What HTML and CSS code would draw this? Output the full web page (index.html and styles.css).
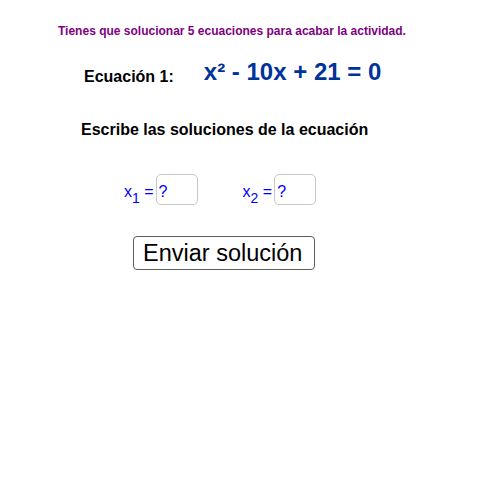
FILE: index.html
```html
<!DOCTYPE html>
<html lang="es">
<head>
<meta charset="utf-8">
<title>Ecuaciones</title>
<link rel="stylesheet" href="styles.css">
</head>
<body>
<div class="page">
  <p class="note">Tienes que solucionar 5 ecuaciones para acabar la actividad.</p>
  <div class="eq-row">
    <span class="eq-label">Ecuación 1:</span>
    <span class="eq">x² - 10x + 21 = 0</span>
  </div>
  <p class="prompt">Escribe las soluciones de la ecuación</p>
  <div class="answers">
    <div class="answer">
      <span class="var">x<sub class="idx">1</sub> =</span>
      <div class="box">?</div>
    </div>
    <div class="answer">
      <span class="var">x<sub class="idx">2</sub> =</span>
      <div class="box">?</div>
    </div>
  </div>
  <button class="send" type="button">Enviar solución</button>
</div>
</body>
</html>
```
FILE: styles.css
```css
html, body {
  margin: 0;
  padding: 0;
  background: #ffffff;
}

.page {
  width: 502px;
  height: 503px;
  padding-top: 24px;
  box-sizing: border-box;
  font-family: "Liberation Sans", Arial, sans-serif;
  color: #000000;
}

.note {
  margin: 0 0 0 58px;
  font-size: 12px;
  line-height: 14px;
  font-weight: bold;
  color: #800080;
}

.eq-row {
  display: flex;
  align-items: flex-start;
  margin-top: 20px;
  padding-left: 84px;
}

.eq-label {
  font-size: 16px;
  line-height: 20px;
  font-weight: bold;
  margin-top: 9px;
}

.eq {
  font-size: 24px;
  line-height: 28px;
  font-weight: bold;
  color: #003399;
  margin-left: 30px;
}

.prompt {
  margin: 33px 0 0 81px;
  font-size: 16px;
  line-height: 20px;
  font-weight: bold;
}

.answers {
  display: flex;
  gap: 45px;
  margin-top: 34px;
  padding-left: 124px;
}

.answer {
  display: flex;
  align-items: baseline;
  color: #0000ff;
  font-size: 16px;
  line-height: 18px;
}

.var {
  margin-right: 2px;
  white-space: pre;
}

.idx {
  font-size: 14px;
  line-height: 0;
  vertical-align: -6px;
}

.box {
  width: 42px;
  height: 31px;
  box-sizing: border-box;
  border: 1px solid #c8c8c8;
  border-radius: 5px;
  padding: 8px 0 0 2px;
  background: #ffffff;
}

.send {
  display: block;
  width: 182px;
  height: 34px;
  box-sizing: border-box;
  margin: 31px 0 0 133px;
  padding: 0 0 0 9px;
  border: 1px solid #5e5e5e;
  border-radius: 4px;
  background: #ffffff;
  color: #000000;
  font-family: "Liberation Sans", Arial, sans-serif;
  font-size: 23.5px;
  line-height: 32px;
  text-align: left;
}
```
